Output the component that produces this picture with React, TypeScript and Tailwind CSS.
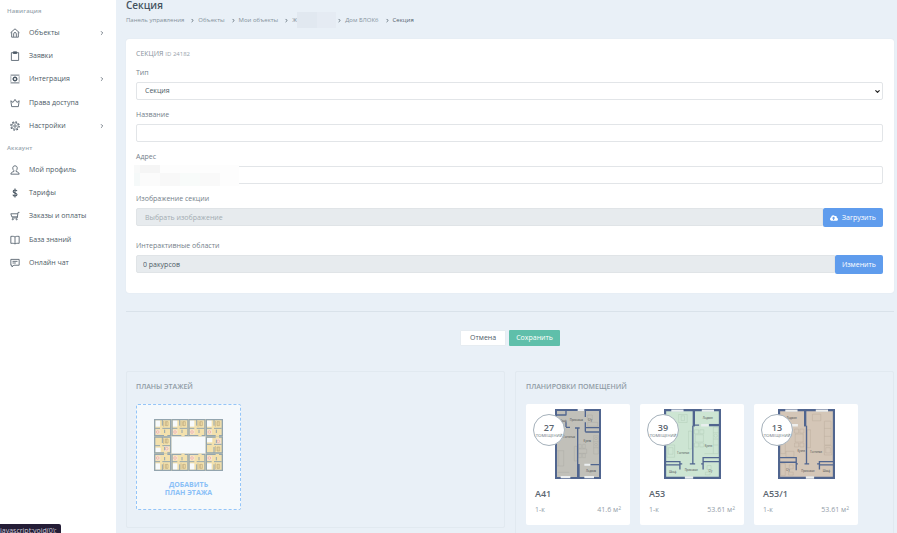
import type { ReactNode } from 'react';
import { ChevronRight, ChevronDown } from 'lucide-react';
import { FaCloudUploadAlt } from 'react-icons/fa';

type Icon = ReactNode;

const icons: Record<string, Icon> = {
  home: (
    <>
      <path d="M1 8.500 9 1.500l8 7" />
      <path d="M3 7.500v9h12v-9" />
      <path d="M6.600 16v-5.500a2.400 2.400 0 0 1 4.800 0V16" />
    </>
  ),
  clipboard: (
    <>
      <path d="M2.500 3h13v14h-13z" />
      <path d="M6 1.500h6v3H6z" fill="currentColor" />
    </>
  ),
  integration: (
    <>
      <path d="M1 2h16M1 16h16" />
      <path d="M1.500 4.500v9M16.500 4.500v9" strokeDasharray="2 1.500" />
      <circle cx="9" cy="9" r="3" strokeWidth="2.200" />
      <path d="M9 4v2M9 12v2M4 9h2M12 9h2M5.500 5.500l1.400 1.400M11.100 11.100l1.400 1.400M12.500 5.500l-1.400 1.400M6.900 11.100l-1.400 1.400" />
    </>
  ),
  crown: <path d="M3 15.500 1.500 5l4 3L9 2.500 12.500 8l4-3L15 15.500z" />,
  gear: (
    <>
      <circle cx="9" cy="9" r="2.200" />
      <circle cx="9" cy="9" r="5.800" strokeWidth="1.200" />
      <circle cx="9" cy="9" r="7.500" strokeWidth="2" strokeDasharray="2.945 2.945" />
    </>
  ),
  user: (
    <path d="M9 1.500c-2.800 0-4 1.800-4 4 0 2 .8 3.600 2 4.600v1.600c-2 .6-5.500 1.500-5.500 4.800h15c0-3.300-3.500-4.200-5.500-4.800v-1.600c1.200-1 2-2.600 2-4.600 0-2.200-1.200-4-4-4z" />
  ),
  dollar: (
    <path
      d="M12.500 5.800C12.200 4.300 11 3.600 9 3.600c-2 0-3.300.9-3.300 2.500 0 3.700 6.900 2 6.900 5.800 0 1.700-1.500 2.600-3.600 2.600-2.200 0-3.500-.9-3.700-2.600M9 1v16"
      strokeWidth="2"
    />
  ),
  cart: (
    <>
      <path d="M17 2.500h-2.500L13 12.500H3.500M14 5H1.500l1.800 5.500H13.200" />
      <circle cx="5" cy="15" r="1" />
      <circle cx="12" cy="15" r="1" />
    </>
  ),
  book: <path d="M9 3.500C7.500 2.300 5 2.200 1.500 2.500v12.500c3.500-.3 6 0 7.500 1.200 1.500-1.200 4-1.500 7.500-1.200V2.500C13 2.200 10.500 2.300 9 3.500zm0 0v12.700" />,
  chat: (
    <>
      <path d="M1.500 2.500h15v10.500H7L3.500 16v-3h-2z" />
      <path d="M4.500 6h9M4.500 9h6" />
    </>
  ),
};

type NavItem = { label: string; icon: string; arrow?: boolean };

const mainNav: NavItem[] = [
  { label: 'Объекты', icon: 'home', arrow: true },
  { label: 'Заявки', icon: 'clipboard' },
  { label: 'Интеграция', icon: 'integration', arrow: true },
  { label: 'Права доступа', icon: 'crown' },
  { label: 'Настройки', icon: 'gear', arrow: true },
];

const accountNav: NavItem[] = [
  { label: 'Мой профиль', icon: 'user' },
  { label: 'Тарифы', icon: 'dollar' },
  { label: 'Заказы и оплаты', icon: 'cart' },
  { label: 'База знаний', icon: 'book' },
  { label: 'Онлайн чат', icon: 'chat' },
];

function NavList({ title, items }: { title: string; items: NavItem[] }) {
  return (
    <section>
      <h2 className="pl-[7px] text-[6px] leading-[10px] font-semibold tracking-wide text-[#9aa7b0]">{title}</h2>
      <ul className="mt-[5px] grid h-[117px] auto-rows-fr">
        {items.map((item) => (
          <li key={item.label} className="flex">
            <a href="#" className="flex flex-1 items-center pr-[11px] pl-[10px] text-[#4d5a66]">
              <svg viewBox="0 0 18 18" className="size-[10px]" fill="none" stroke="currentColor" strokeWidth="1.500">
                {icons[item.icon]}
              </svg>
              <span className="ml-[9px] flex-1 whitespace-nowrap">{item.label}</span>
              {item.arrow && <ChevronRight className="size-[6px]" strokeWidth={3} />}
            </a>
          </li>
        ))}
      </ul>
    </section>
  );
}

function Crumb({ children }: { children: ReactNode }) {
  return (
    <li className="flex items-center">
      {children}
      <ChevronRight className="mr-[3px] ml-[6px] size-[5px] text-[#52606c]" strokeWidth={4} />
    </li>
  );
}

const fieldClass = 'block h-[18px] w-full rounded-[2px] border border-[#e2e5e8] bg-white px-[8px] text-[7px] text-[#4d5a66] outline-none';
const labelClass = 'mb-[4px] block leading-[10px] text-[#74808a]';

function Room({ x, y, label }: { x: number; y: number; label: string }) {
  return (
    <text x={x} y={y} fontSize="8" textAnchor="middle" fill="#3d4046">
      {label}
    </text>
  );
}

const wall = '#50658f';

function PlanA41() {
  return (
    <svg viewBox="0 0 138 210" className="h-[70px] w-[46px]">
      <path d="M0 0h138v210H0z" fill="#c1c0b9" />
      <g fill="none" stroke="#a3a39e" strokeWidth="1">
        <path d="M6 125h20v46H6zM11 125v46M58 112h8v44h-8zM116 80h14v55h-14zM116 98h14M116 116h14M71 106h8v12h-8zM83 106h8v12h-8zM71 134h8v12h-8zM83 134h8v12h-8zM70 120h25v13H70zM98 18h14v14H98zM98 40h30v12H98zM8 190h35" />
        <circle cx="123" cy="88" r="4" />
        <circle cx="123" cy="107" r="4" />
      </g>
      <path d="M3 3h132v204H3z" fill="none" stroke={wall} strokeWidth="6" />
      <path
        d="M0 18h34M33 2v17M33 40v14M33 55h12M60 57h14M68 57v147M91 2v22M91 40v28M91 56h45M91 69h45M70 167h4M106 167h30M72 167v37"
        fill="none"
        stroke={wall}
        strokeWidth="4"
      />
      <path d="M68 0h20v6H68zM17 201h29v7H17zM88 201h29v7H88zM88 164h18v6H88z" fill="#eceff1" />
      <Room x={64} y={35} label="Прихожая" />
      <Room x={105} y={36} label="С/у" />
      <Room x={24} y={40} label="Шкаф" />
      <Room x={42} y={87} label="Гостиная" />
      <Room x={97} y={98} label="Кухня" />
      <Room x={108} y={190} label="Лоджия" />
    </svg>
  );
}

function PlanA53() {
  return (
    <svg viewBox="0 0 172 210" className="h-[70px] w-[57px]">
      <path d="M0 0h172v210H0z" fill="#cde5d3" />
      <g fill="none" stroke="#a5c3ad" strokeWidth="1">
        <path d="M44 16h26v24H44zM52 20h10v14H52zM74 66h10v54H74zM9 108h23v37H9zM13 116h14v20H13zM92 62h12v12H92zM108 62h12v12h-12zM92 102h12v12H92zM108 102h12v12h-12zM94 77h25v22H94zM149 54h15v80h-15zM149 71h15M149 90h15M149 108h15M122 134h26M130 170h12v12h-12zM125 190h14v8h-14z" />
        <circle cx="156" cy="80" r="5" />
      </g>
      <path d="M3 3h166v204H3z" fill="none" stroke={wall} strokeWidth="7" />
      <path d="M90 2v50" stroke={wall} strokeWidth="7" />
      <path
        d="M87 50v114M78 165h16M88 48h18M4 158h44v24M4 168h44M48 165h7M118 182v-36h50M118 158h50M112 165h5"
        fill="none"
        stroke={wall}
        strokeWidth="4"
      />
      <path d="M136 48h36" stroke={wall} strokeWidth="7" />
      <path d="M22 1h37v7H22zM114 1h37v7h-37zM112 45h22v7h-22zM63 202h25v8H63z" fill="#e8eeee" />
      <Room x={132} y={31} label="Лоджия" />
      <Room x={134} y={113} label="Кухня" />
      <Room x={58} y={136} label="Гостиная" />
      <Room x={26} y={192} label="Шкаф" />
      <Room x={82} y={186} label="Прихожая" />
      <Room x={140} y={188} label="С/у" />
    </svg>
  );
}

function PlanA531() {
  return (
    <svg viewBox="0 0 172 210" className="h-[70px] w-[57px]">
      <path d="M0 0h172v210H0z" fill="#d4c6b7" />
      <g fill="none" stroke="#b2a392" strokeWidth="1">
        <path d="M104 15h25v20h-25zM140 36h20v72h-20zM140 58h20M140 82h20M140 110h22v28h-22zM144 116h14v16h-14zM88 62h10v54H88zM50 60h12v12H50zM66 60h12v12H66zM50 102h12v12H50zM66 102h12v12H66zM52 75h24v24H52zM8 54h14v80H8zM8 72h14M8 92h14M24 127h24v17H24zM8 164h14v36H8zM34 168h12v12H34zM32 190h14v9H32z" />
        <circle cx="15" cy="82" r="5" />
      </g>
      <path d="M3 3h166v204H3z" fill="none" stroke={wall} strokeWidth="7" />
      <path d="M82 2v50" stroke={wall} strokeWidth="7" />
      <path
        d="M86 50v114M80 165h14M36 48h-30M4 146h51v38M4 160h50M55 165h5M168 158h-43v24M168 168h-43M118 165h7"
        fill="none"
        stroke={wall}
        strokeWidth="4"
      />
      <path d="M22 1h37v7H22zM114 1h37v7h-37zM38 45h22v7H38zM84 202h25v8H84z" fill="#eeeeec" />
      <Room x={41} y={31} label="Лоджия" />
      <Room x={70} y={128} label="Кухня" />
      <Room x={115} y={131} label="Гостиная" />
      <Room x={30} y={187} label="С/у" />
      <Room x={90} y={188} label="Прихожая" />
      <Room x={146} y={188} label="Шкаф" />
    </svg>
  );
}

function FlatUnit({ x, y, flip, rotated }: { x: number; y: number; flip?: boolean; rotated?: boolean }) {
  const base = `translate(${x} ${y})`;
  return (
    <g transform={flip ? `${base} translate(0 52) scale(1 -1)` : base}>
      <path d="M0 0h52v52H0z" fill="#f3e1ad" />
      <path d={rotated ? 'M4 34h16v13H4z' : 'M4 4h14v19H4z'} fill="#f7fafb" />
      <path d={rotated ? 'M30 29h16v16H30z' : 'M4 32h15v14H4z'} fill="#f6e3d0" />
      <circle cx={rotated ? 38 : 11} cy={rotated ? 37 : 39} r="4" fill="none" stroke="#eba9a0" strokeWidth="2" />
      <path d="M29 6v17M34 8h8v12h-8zM37 8v12" fill="none" stroke="#bda97d" strokeWidth="2" />
      <path d="M2 2h48v48H2z" fill="none" stroke="#93a5ae" strokeWidth="4" />
      <path d="M2 28h16M25 2v18M25 28h23M32 32v10" stroke="#93a5ae" strokeWidth="3" />
      <path d="M30 47h10v5H30z" fill="#f3e1ad" />
    </g>
  );
}

function FloorPlan() {
  return (
    <svg viewBox="0 0 207 156" className="h-[52px] w-[69px]">
      {[0, 52, 103, 155].map((x) => (
        <g key={x}>
          <FlatUnit x={x} y={0} />
          <FlatUnit x={x} y={104} flip />
        </g>
      ))}
      <FlatUnit x={0} y={52} rotated />
      <FlatUnit x={155} y={52} rotated flip />
    </svg>
  );
}

const layouts = [
  { name: 'A41', count: 27, area: '41.6', plan: <PlanA41 /> },
  { name: 'A53', count: 39, area: '53.61', plan: <PlanA53 /> },
  { name: 'A53/1', count: 13, area: '53.61', plan: <PlanA531 /> },
];

export default function App() {
  return (
    <div className="flex h-screen overflow-hidden bg-[#e9f0f7] font-['Open_Sans','Noto_Sans',sans-serif] text-[7px] leading-[10px] text-[#4d5a66]">
      <nav className="flex w-[116px] shrink-0 flex-col gap-[5px] bg-white pt-[6px]">
        <NavList title="Навигация" items={mainNav} />
        <NavList title="Аккаунт" items={accountNav} />
      </nav>

      <main className="min-w-0 flex-1 pr-[3px] pl-[10px]">
        <h1 className="text-[10px] leading-[11px] font-semibold text-[#44525e]">Секция</h1>
        <ol className="mt-[4px] flex h-[10px] items-center text-[6px] whitespace-nowrap text-[#84909b]">
          <Crumb><a href="#">Панель управления</a></Crumb>
          <Crumb><a href="#">Объекты</a></Crumb>
          <Crumb><a href="#">Мои объекты</a></Crumb>
          <Crumb>
            <a href="#" className="-mr-[5px] flex items-center">
              Ж
              <span className="flex h-[16px] w-[39px]">
                <span className="w-[20px] bg-[#e1e8f0]" />
                <span className="flex-1 bg-[#e5ebf3]" />
              </span>
            </a>
          </Crumb>
          <Crumb><a href="#">Дом БЛОК6</a></Crumb>
          <li className="text-[#52606c]">Секция</li>
        </ol>

        <form className="mt-[14px] rounded-[3px] bg-white pt-[10px] pr-[11px] pb-[19px] pl-[10px] shadow-[0_0_1px_#cfd9e3]">
          <h2 className="mb-[9px] text-[7px] leading-[10px] text-[#87929c]">
            СЕКЦИЯ <small className="text-[6px] text-[#98a2ab]">ID 24182</small>
          </h2>
          <div className="mb-[10px]">
            <label htmlFor="type" className={labelClass}>Тип</label>
            <div className="relative">
              <select id="type" className={`${fieldClass} appearance-none`}>
                <option>Секция</option>
              </select>
              <ChevronDown className="pointer-events-none absolute top-[6px] right-[2px] size-[7px] text-[#222]" strokeWidth={4} />
            </div>
          </div>
          <div className="mb-[10px]">
            <label htmlFor="name" className={labelClass}>Название</label>
            <input id="name" className={fieldClass} />
          </div>
          <div className="mb-[10px]">
            <label htmlFor="address" className={labelClass}>Адрес</label>
            <div className="relative">
              <input id="address" className={fieldClass} />
              <div className="absolute -top-[1px] -left-[2px] flex h-[21px] w-[105px] flex-col bg-[#fdfdfd]">
                <div className="flex h-[8px]">
                  <span className="w-[6px] bg-[#f8f9f9]" />
                  <span className="w-[20px] bg-[#f5f5f5]" />
                </div>
                <div className="flex flex-1">
                  <span className="w-[6px] bg-[#f5f9f9]" />
                  <span className="w-[20px] bg-[#fbfbfb]" />
                  <span className="w-[20px] bg-[#f8f8f8]" />
                  <span className="w-[20px] bg-[#f8fbfa]" />
                  <span className="w-[20px] bg-[#f9f9f9]" />
                </div>
              </div>
            </div>
          </div>
          <div className="mb-[14px]">
            <label htmlFor="image" className={labelClass}>Изображение секции</label>
            <div className="flex">
              <input
                id="image"
                readOnly
                placeholder="Выбрать изображение"
                className="h-[18px] min-w-0 flex-1 rounded-l-[2px] border border-[#e0e4e7] bg-[#e7ebee] px-[8px] outline-none placeholder:text-[#a3abb2]"
              />
              <button type="button" className="flex h-[19px] items-center gap-[4px] rounded-[2px] bg-[#5f9ced] px-[7px] text-white">
                <FaCloudUploadAlt className="size-[8px]" />
                Загрузить
              </button>
            </div>
          </div>
          <div>
            <label htmlFor="areas" className={labelClass}>Интерактивные области</label>
            <div className="flex">
              <input
                id="areas"
                readOnly
                value="0 ракурсов"
                className="h-[18px] min-w-0 flex-1 rounded-l-[2px] border border-[#e0e4e7] bg-[#e7ebee] px-[6px] outline-none"
              />
              <button type="button" className="h-[19px] rounded-[2px] bg-[#5f9ced] px-[7px] text-white">
                Изменить
              </button>
            </div>
          </div>
        </form>

        <hr className="mt-[18px] border-[#d9e2ea]" />
        <div className="mt-[18px] flex justify-center gap-[3px]">
          <button type="button" className="h-[16px] rounded-[1px] border border-[#e6ecf1] bg-white px-[9px]">Отмена</button>
          <button type="button" className="h-[16px] rounded-[1px] bg-[#5fbfaa] px-[7px] text-white">Сохранить</button>
        </div>

        <div className="mt-[25px] grid grid-cols-2 items-start gap-[10px]">
          <section className="rounded-[2px] border border-[#e1e9f0] px-[9px] pt-[10px] pb-[17px]">
            <h2 className="mb-[12px] text-[7px] leading-[10px] font-semibold text-[#8f9ba5]">ПЛАНЫ ЭТАЖЕЙ</h2>
            <button
              type="button"
              className="flex h-[106px] w-[105px] flex-col items-center rounded-[2px] border border-dashed border-[#94c5f8] bg-[#f5f9fc] pt-[14px] text-[7px] leading-[8px] font-bold text-[#8ac0f7]"
            >
              <FloorPlan />
              <span className="mt-[10px]">ДОБАВИТЬ</span>
              <span>ПЛАН ЭТАЖА</span>
            </button>
          </section>

          <section className="rounded-[2px] border border-[#e1e9f0] px-[10px] pt-[10px] pb-[17px]">
            <h2 className="mb-[12px] text-[7px] leading-[10px] font-semibold text-[#8f9ba5]">ПЛАНИРОВКИ ПОМЕЩЕНИЙ</h2>
            <div className="flex gap-[10px]">
              {layouts.map((item) => (
                <article key={item.name} className="relative h-[121px] w-[104px] rounded-[2px] bg-white px-[9px] pt-[5px]">
                  <div className="flex justify-center">{item.plan}</div>
                  <div className="absolute top-[10px] left-[7px] flex size-[32px] flex-col items-center justify-center rounded-full border border-[#a5b1bb] bg-white">
                    <span className="text-[9px] leading-[10px] font-semibold text-[#5b656f]">{item.count}</span>
                    <span className="text-[4px] leading-[5px] text-[#6b757d]">ПОМЕЩЕНИЙ</span>
                  </div>
                  <h3 className="mt-[10px] text-[9px] leading-[10px] font-semibold text-[#5b6670]">{item.name}</h3>
                  <p className="mt-[6px] flex justify-between text-[#939da8]">
                    <span>1-к</span>
                    <span>
                      {item.area} м<sup className="text-[5px]">2</sup>
                    </span>
                  </p>
                </article>
              ))}
            </div>
          </section>
        </div>
      </main>

      <div className="fixed bottom-0 left-0 h-[9px] w-[61px] overflow-hidden rounded-tr-[2px] bg-[#241d36] pt-[2px] leading-[10px] whitespace-nowrap text-[#cfcbd9]">
        javascript:void(0);
      </div>
    </div>
  );
}
